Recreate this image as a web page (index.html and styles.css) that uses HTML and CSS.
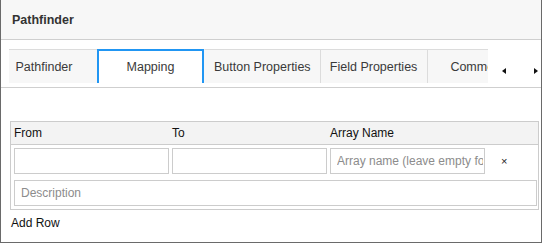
FILE: index.html
```html
<!DOCTYPE html>
<html lang="en">
<head>
<meta charset="utf-8">
<title>Pathfinder</title>
<link rel="stylesheet" href="styles.css">
</head>
<body>
<div class="frame">
  <div class="header">Pathfinder</div>
  <div class="tabbar">
    <div class="tabs-viewport">
      <div class="tabs-track">
        <div class="tab">Pathfinder</div>
        <div class="tab active">Mapping</div>
        <div class="tab">Button Properties</div>
        <div class="tab">Field Properties</div>
        <div class="tab">Comments</div>
      </div>
    </div>
    <div class="scroll-arrows">
      <span class="arrow arrow-left"></span>
      <span class="arrow arrow-right"></span>
    </div>
  </div>
  <div class="content">
    <div class="mapping-table">
      <div class="mt-head">
        <div class="mt-label">From</div>
        <div class="mt-label">To</div>
        <div class="mt-label">Array Name</div>
      </div>
      <div class="mt-body">
        <div class="mt-row">
          <input class="field" type="text">
          <input class="field" type="text">
          <input class="field" type="text" placeholder="Array name (leave empty for none)">
          <span class="remove">×</span>
        </div>
        <input class="field desc" type="text" placeholder="Description">
      </div>
    </div>
    <div class="add-row">Add Row</div>
  </div>
</div>
</body>
</html>
```

FILE: styles.css
```css
* { box-sizing: border-box; }
html, body { margin: 0; padding: 0; background: #fff; }
body { font-family: "Liberation Sans", Arial, sans-serif; }

.frame {
  width: 542px;
  height: 243px;
  border-left: 1px solid #6a6a6a;
  border-right: 1px solid #6a6a6a;
  border-bottom: 1px solid #6a6a6a;
  overflow: hidden;
}

.header {
  height: 40px;
  padding-top: 1px;
  line-height: 38px;
  background: #f7f7f7;
  border-bottom: 1px solid #cfcfcf;
  padding-left: 11px;
  font-weight: bold;
  font-size: 12.5px;
  color: #333;
}

.tabbar {
  display: flex;
  padding: 9px 0 4px 8px;
  border-bottom: 1px solid #cfcfcf;
}

.tabs-viewport {
  width: 479px;
  height: 34px;
  overflow: hidden;
  flex: none;
}

.tabs-track {
  display: flex;
  margin-left: -19px;
  height: 34px;
}

.tab {
  flex: none;
  min-width: 107px;
  height: 34px;
  padding: 1px 9px 0;
  line-height: 32px;
  text-align: center;
  white-space: nowrap;
  font-size: 12.5px;
  color: #3a3a3a;
  background: #f7f7f7;
  border-top: 1px solid #dcdcdc;
  border-left: 1px solid #dcdcdc;
}

.tab.active {
  background: #fff;
  border: 2px solid #2196f3;
  border-bottom: 0;
  padding-top: 0;
  line-height: 33px;
}

.tab.active + .tab { border-left-color: #f7f7f7; }

.scroll-arrows {
  display: flex;
  align-items: flex-start;
  padding-top: 19px;
}

.arrow {
  width: 0;
  height: 0;
  border-top: 3px solid transparent;
  border-bottom: 3px solid transparent;
}
.arrow-left { border-right: 4px solid #111; margin-left: 14px; }
.arrow-right { border-left: 4px solid #111; margin-left: 28px; }

.content {
  padding: 33px 2px 0 9px;
}

.mapping-table {
  border: 1px solid #cccccc;
}

.mt-head {
  display: grid;
  grid-template-columns: 155px 155px 155px 1fr;
  column-gap: 3px;
  height: 23px;
  padding: 0 3px;
  background: #f3f3f3;
  border-bottom: 1px solid #cccccc;
}

.mt-label {
  font-size: 12px;
  line-height: 23px;
  color: #111;
}

.mt-body {
  padding: 3px 1px 3px 3px;
  display: flex;
  flex-direction: column;
  gap: 6px;
}

.mt-row {
  display: grid;
  grid-template-columns: 155px 155px 155px 1fr;
  column-gap: 3px;
  align-items: center;
}

.field {
  display: block;
  width: 100%;
  height: 26px;
  margin: 0;
  border: 1px solid #cccccc;
  border-radius: 0;
  padding: 0 1px 0 6px;
  font-family: "Liberation Sans", Arial, sans-serif;
  font-size: 12px;
  color: #333;
  background: #fff;
  outline: none;
}
.field::placeholder { color: #8c8c8c; }

.remove {
  font-size: 11px;
  color: #222;
  margin-left: 13px;
  line-height: 1;
}

.add-row {
  margin-top: 5px;
  padding-left: 1px;
  font-size: 12px;
  line-height: 16px;
  color: #111;
}
```
